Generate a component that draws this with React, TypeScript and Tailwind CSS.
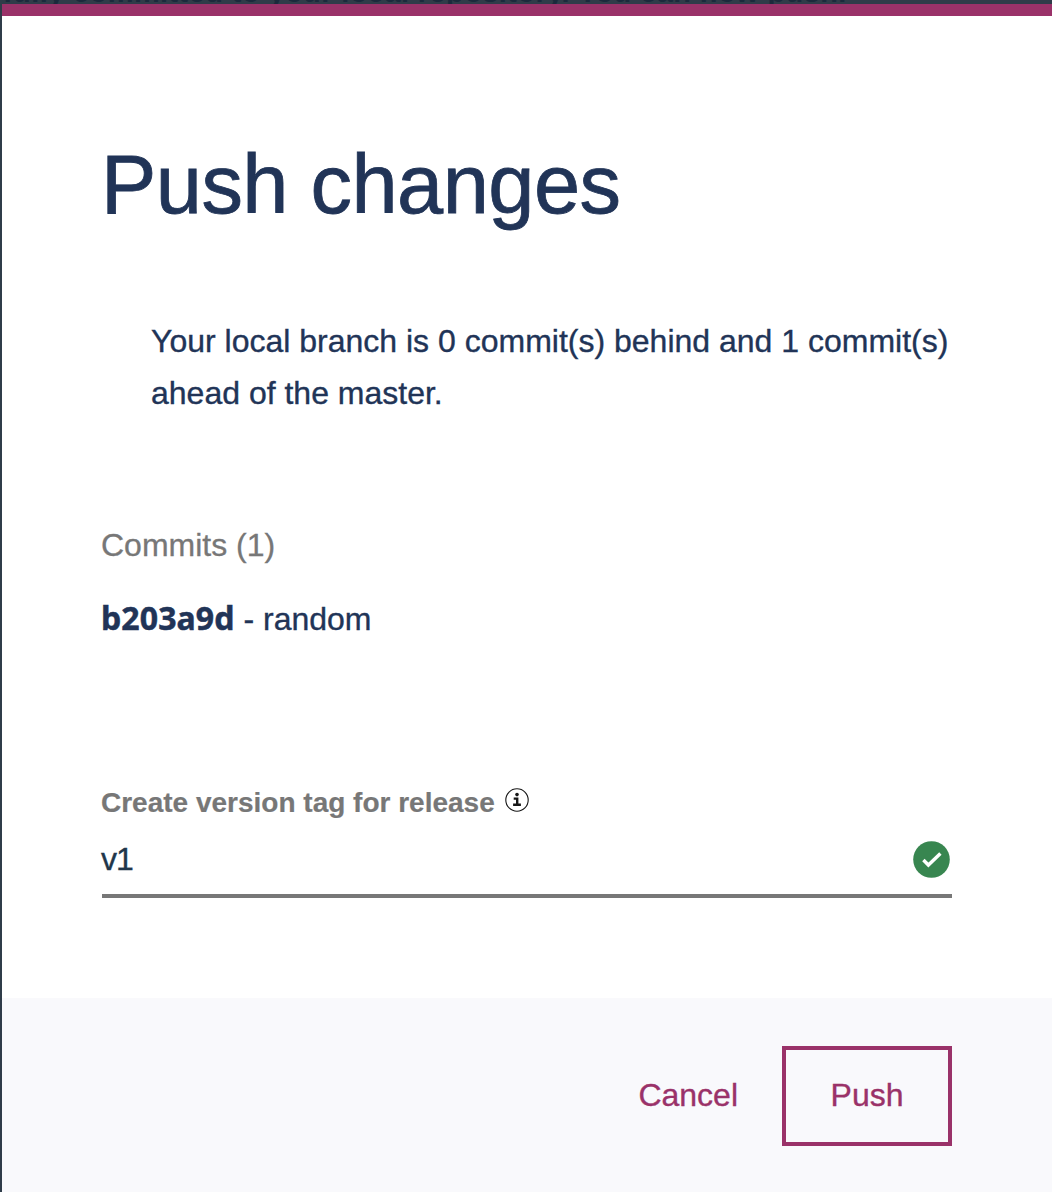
export default function App() {
  return (
    <div className="h-[1192px] w-[1052px] overflow-hidden bg-[#2f3c49] pl-[2px] font-['Liberation_Sans',Arial,sans-serif] text-[#213457]">
      <div className="relative h-1 overflow-hidden">
        <span className="absolute bottom-[-4px] left-[1px] text-[29px] leading-[32px] font-bold tracking-[0.4px] whitespace-nowrap text-[#1b2a3c]">
          fully committed to your local repository. You can now push.
        </span>
      </div>
      <section className="flex h-[1188px] flex-col border-t-[12px] border-[#9a3269] bg-white">
        <main className="h-[982px] px-[100px]">
          <h1 className="-ml-px pt-[121px] text-[83px] leading-[96px] tracking-[-0.55px] whitespace-nowrap [-webkit-text-stroke:0.8px_#213457]">
            Push changes
          </h1>
          <p className="mt-[82px] pl-[49px] text-[32px] leading-[52px] tracking-[0] whitespace-nowrap [-webkit-text-stroke:0.35px_#213457]">
            Your local branch is 0 commit(s) behind and 1 commit(s)
            <br />
            ahead of the master.
          </p>
          <h2 className="mt-[106px] -ml-px text-[32px] leading-[40px] tracking-[0] text-[#777777] [-webkit-text-stroke:0.3px_#777777]">
            Commits (1)
          </h2>
          <p className="mt-[33px] -ml-px text-[32px] leading-[40px] tracking-[0] whitespace-nowrap [-webkit-text-stroke:0.35px_#213457]">
            <strong className="font-['Noto_Sans',sans-serif] text-[32px] font-bold tracking-[0.1px] [-webkit-text-stroke:0.5px_#213457]">
              b203a9d
            </strong>{" "}
            - random
          </p>
          <div className="mt-[148px] flex h-8 items-center">
            <label className="-ml-px text-[28px] leading-[32px] font-bold tracking-[0] whitespace-nowrap text-[#777777] [-webkit-text-stroke:0.2px_#777777]">
              Create version tag for release
            </label>
            <svg className="mb-[7px] ml-[10px] h-6 w-6" viewBox="0 0 24 24" fill="none">
              <circle cx="12" cy="12" r="11.2" stroke="#161616" strokeWidth="1.1" />
              <circle cx="12" cy="6.6" r="1.8" fill="#161616" />
              <path d="M8.7 10.6h3.5v6.2M8.1 16.8h7.8" stroke="#161616" strokeWidth="2.4" />
            </svg>
          </div>
          <div className="mt-[3px] flex h-[76px] items-center justify-between border-b-4 border-[#777777] pt-[2px] text-[32px] tracking-[-1px]">
            <span className="-ml-px text-[#21364a] [-webkit-text-stroke:0.35px_#21364a]">v1</span>
            <svg className="mr-[2px] h-[37px] w-[37px]" viewBox="0 0 37 37" fill="none">
              <circle cx="18.5" cy="18.5" r="18.3" fill="#388650" />
              <path d="m10.4 19 5 5 12-11.5" stroke="white" strokeWidth="3.4" />
            </svg>
          </div>
        </main>
        <footer className="flex h-[194px] items-start justify-end bg-[#f9f9fc] pt-12 pr-[100px] text-[32px] tracking-[0] text-[#9a3269] [-webkit-text-stroke:0.35px_#9a3269]">
          <button className="mr-[44px] h-[100px] pb-[2px]">Cancel</button>
          <button className="h-[100px] w-[170px] border-4 border-[#9a3269] pb-[2px]">Push</button>
        </footer>
      </section>
    </div>
  );
}
